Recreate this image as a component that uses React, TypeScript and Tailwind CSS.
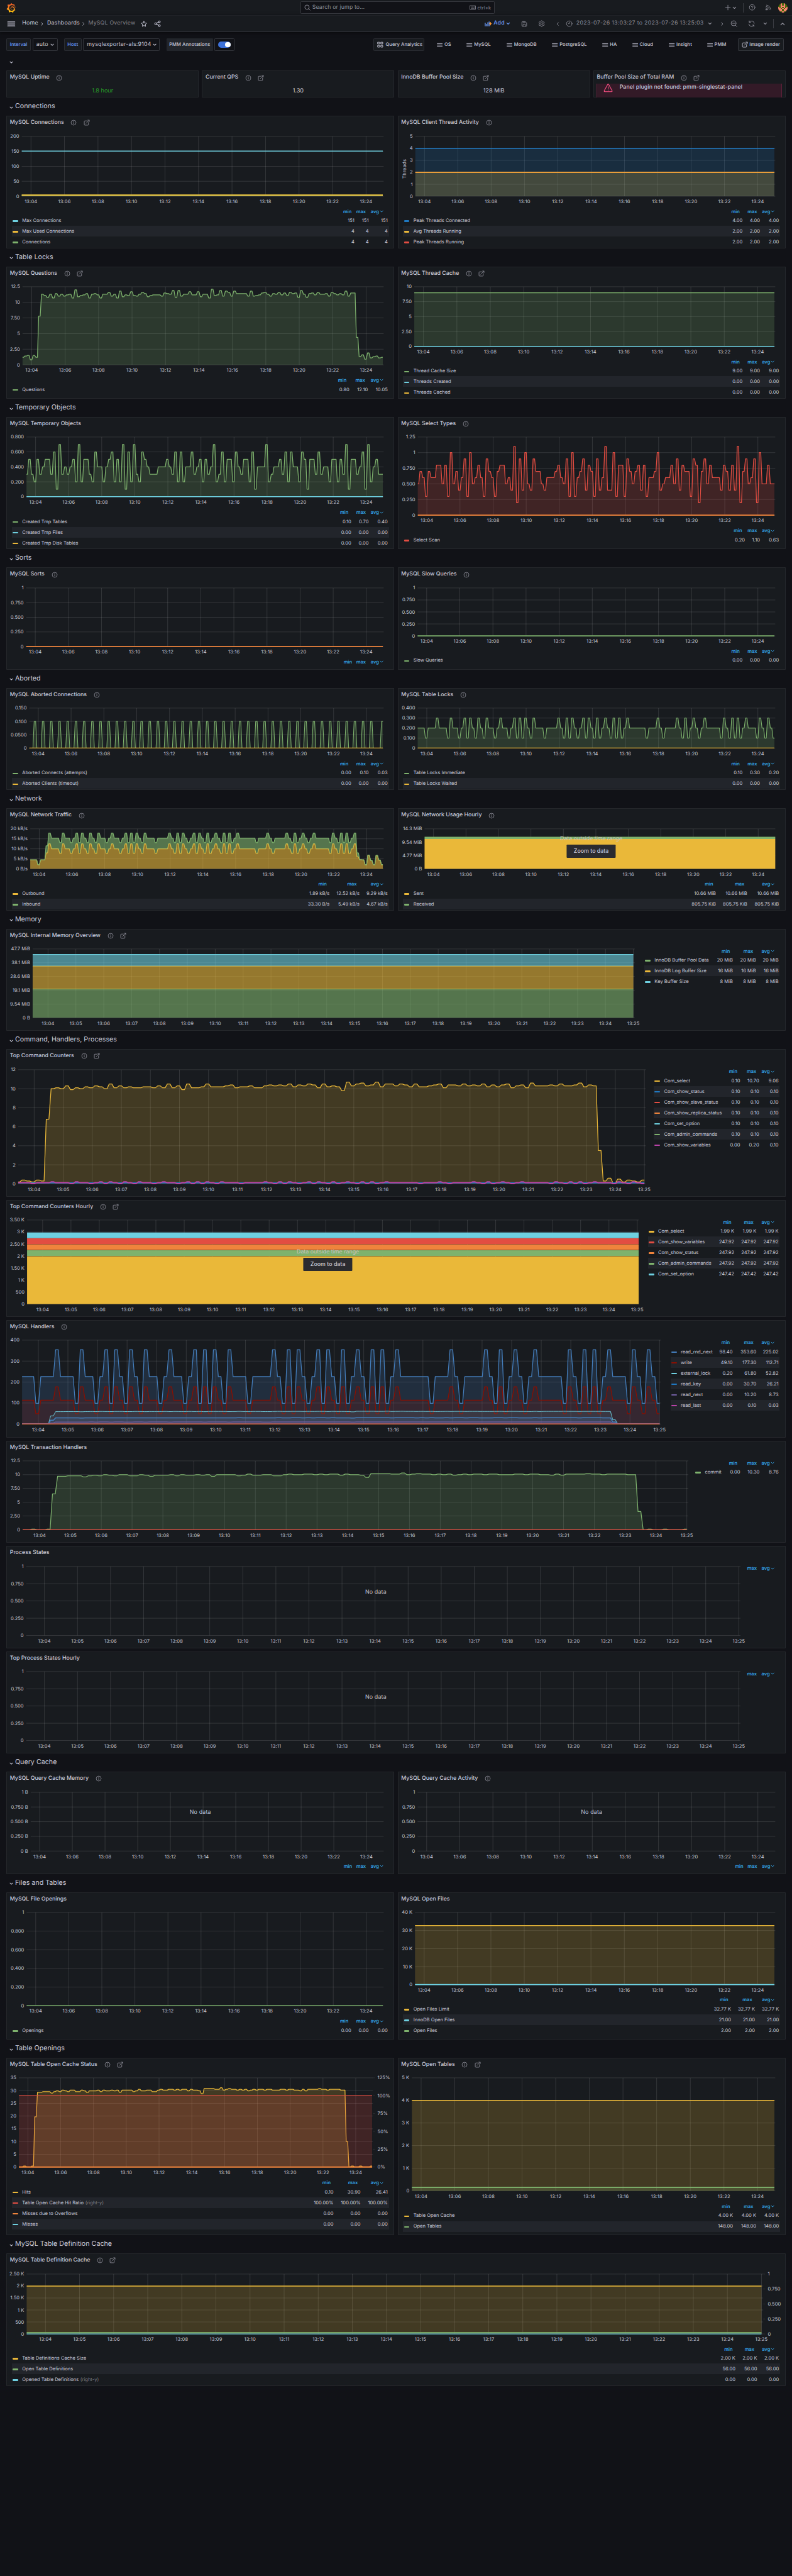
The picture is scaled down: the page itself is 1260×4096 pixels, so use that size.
import React from "react";
import { SiGrafana } from "react-icons/si";

const GREEN = "#7eb26d";
const YELLOW = "#eab839";
const CYAN = "#6ed0e0";
const ORANGE = "#ef843c";
const RED = "#e24d42";
const BLUE = "#1f78c1";
const STEEL = "#447ebc";
const MAROON = "#890f02";
const PURPLE = "#ba43a9";
const VIOLET = "#705da0";

/* ---------- sampled data: one value per 10 seconds, 130 samples ---------- */

const SAMPLES = 130;
const DURATION = 1296;

const questions = [
  1.2, 1.4, 1.5, 0.8, 1.5, 1.2, 7.8, 11.3, 11.1, 10.8, 11.3, 10.7, 11.4, 11, 11.3, 11, 11.2, 11.3, 10.7, 12, 10.9, 11.1, 11.2, 11.4, 10.7,
  11.3, 11.4, 11.2, 10.7, 11.3, 11.3, 11.6, 11, 11.3, 10.7, 11.8, 10.9, 11.2, 11.1, 11.7, 11.1, 11, 11.3, 11.6, 11.4, 10.9, 11.1, 11.2,
  11.2, 11.2, 11, 11.5, 11.4, 11.3, 11.9, 10.8, 11.9, 11, 11.3, 11.3, 11.7, 11.2, 11.2, 11.7, 10.9, 11.3, 11.3, 10.7, 12.1, 11.1, 11.2,
  11.9, 11, 11.8, 11.6, 11, 11.8, 11.4, 11.4, 11.4, 11.4, 11, 11.8, 11, 11.1, 11.2, 11.5, 11.6, 11.3, 11, 11.4, 11.3, 11.6, 11.2, 11.5,
  11.1, 11.6, 11.4, 11.5, 10.8, 11.9, 11.3, 10.8, 11.4, 11.5, 11.2, 11.6, 11.3, 11.3, 11.4, 11, 11.6, 11.4, 11.2, 11.4, 11.2, 11.8, 11,
  11.5, 11.5, 4.4, 1.3, 1.6, 0.9, 1.9, 1.1, 1.3, 1.4, 1.1, 1.2,
];

const tenths = (s: string) => s.split(" ").map((n) => Number(n) / 10);

const tmpTables = tenths(
  "3 5 3 2 5 3 4 5 5 3 6 1 7 3 4 3 4 5 2 7 2 5 5 3 2 6 4 4 2 4 5 6 2 5 2 7 1 6 2 7 3 2 6 5 4 3 3 3 4 4 4 5 4 3 6 2 6 2 4 4 6 3 4 5 2 5 3 4 7 2 3 6 2 5 5 2 6 4 3 5 5 2 6 1 4 4 4 7 2 3 4 4 5 3 6 2 6 4 4 2 6 5 1 5 5 3 6 3 4 4 2 5 5 2 5 3 7 1 5 5 3 4 6 1 7 2 4 5 3 3",
);

const selectScan = tenths(
  "5 7 6 3 7 6 6 8 8 5 8 3 10 5 7 4 6 9 3 10 5 6 8 6 3 9 7 6 3 7 8 8 5 6 4 11 2 9 4 10 5 4 9 7 7 5 4 6 6 6 7 8 6 5 9 3 10 3 6 7 9 4 8 7 3 9 4 6 11 4 4 10 3 8 8 3 9 7 5 7 8 4 8 3 6 6 7 10 4 5 6 6 8 5 9 4 8 7 7 3 9 8 2 7 9 5 8 6 6 6 4 8 7 4 8 4 11 2 7 9 5 6 9 2 10 5 5 8 5 5",
);

const comSelect = [
  0.2, 0.4, 0.3, 0.2, 0.4, 0.3, 6.8, 10, 10.1, 10, 10.3, 9.9, 10.1, 10, 10.2, 10.1, 10.3, 10.2, 10, 10.5, 10.1, 10.3, 10.1, 10.2, 10.1,
  10.1, 10.2, 10.2, 10.1, 10.3, 10.1, 10.5, 10.1, 10.3, 9.9, 10.5, 10.1, 10.1, 10.2, 10.5, 10.2, 10.2, 10.2, 10.3, 10.4, 10.1, 10.2,
  10.2, 10.3, 10.1, 10.1, 10.3, 10.4, 10.3, 10.4, 10.3, 10.5, 10.2, 10.4, 10.3, 10.5, 10.4, 10.1, 10.5, 10.2, 10.3, 10.2, 9.8, 10.7,
  10.3, 10.5, 10.6, 10.3, 10.4, 10.7, 10.2, 10.5, 10.5, 10.3, 10.5, 10.4, 10.2, 10.5, 10.2, 10.2, 10.3, 10.4, 10.5, 10.1, 10.4, 10.4,
  10.3, 10.5, 10.3, 10.4, 10.3, 10.5, 10.2, 10.4, 10.2, 10.4, 10.5, 10.1, 10.3, 10.4, 10.1, 10.6, 10.3, 10.3, 10.3, 10.4, 10.3, 10.5,
  10.3, 10.3, 10.4, 10.6, 10.2, 10.4, 10.3, 3.5, 0.3, 0.6, 0.1, 0.5, 0.2, 0.4, 0.3, 0.2, 0.4,
];

const commit = [
  0, 0, 0.1, 0, 0, 0.1, 6.5, 9.7, 9.7, 9.8, 9.8, 9.8, 9.6, 9.8, 9.9, 9.8, 10, 9.9, 9.8, 10, 10, 9.8, 9.8, 10, 9.9, 9.7, 9.9, 9.9, 9.9,
  10, 9.8, 10, 9.9, 9.9, 10, 9.9, 10, 9.7, 10, 10, 10, 10, 9.8, 9.9, 10.1, 9.9, 9.9, 10, 10, 9.8, 9.8, 10, 10.1, 10, 10, 10.1, 10.1, 10,
  10.1, 10, 10.1, 10.1, 9.9, 10.1, 10, 10, 9.9, 9.5, 10.2, 10.2, 10.2, 10.2, 10.1, 10.1, 10.3, 10, 10.1, 10.2, 10.1, 10.1, 10, 10.1, 10,
  10.1, 9.9, 10, 10.1, 10, 10.1, 10.1, 10, 10.1, 10.1, 10, 10, 10, 10.1, 10.1, 10, 10.1, 10.1, 10, 10, 9.9, 10.1, 9.9, 10.1, 10.1, 10.1,
  10.1, 10.2, 10.1, 10.1, 10, 10.1, 10.1, 10.1, 10.1, 10, 10, 3.3, 0, 0.1, 0, 0, 0.1, 0, 0, 0, 0.1,
];

const highs = new Set([
  7, 12, 17, 19, 22, 25, 30, 35, 37, 39, 42, 51, 54, 56, 60, 62, 65, 68, 71, 73, 76, 87, 94, 97, 100, 104, 111, 114, 116, 119, 124, 127,
]);
const lows = new Set([
  3, 11, 15, 18, 21, 24, 28, 33, 36, 38, 41, 46, 53, 55, 58, 61, 64, 66, 70, 72, 74, 83, 89, 96, 98, 102, 110, 113, 115, 117, 123, 126, 129,
]);

const each = (f: (i: number) => number) => Array.from({ length: SAMPLES }, (_, i) => f(i));
const pulse = (low: number, mid: number, high: number) => each((i) => (highs.has(i) ? high : lows.has(i) ? low : mid));
const plateau = (edge: number, top: number) =>
  each((i) => (i < 6 || i > 120 ? 0.5 : i === 6 ? edge : i === 120 ? top / 3 : top * (0.96 + (commit[i] - 9.6) * 0.06)));

const aborted = each((i) => ((i % 3 === 2 && i < 128) || i === 129 ? 0.1 : 0));
const lockPulse = pulse(0.1, 0.2, 0.3);
const outbound = pulse(7.7, 10, 12.5).map((v, i) => {
  if (i < 6) return i === 3 ? 2 : 4.4;
  if (i === 6) return 8;
  if (i < 120) return v;
  return [6, 4.5, 4.4, 2, 6.8, 4.1, 2, 6.6, 4.3, 2][i - 120];
});
const inboundTop = outbound.map((v, i) => (i < 6 || i > 120 ? v + 0.1 : i === 6 ? 11.5 : i === 120 ? 8 : v + 5.4));
const hits = commit.map((v) => v * 3 + (v > 5 ? 0.2 : 0.1));

/* ------------------------------- chart ------------------------------- */

type Series = { c: string; v: number | number[]; fill?: number; w?: number; base?: number | number[]; full?: boolean; line?: boolean };

type ChartProps = {
  w: number;
  bottom: number;
  l: number;
  r: number;
  b: number;
  max: number;
  ticks: string[];
  minutes?: 1 | 2;
  series?: Series[];
  right?: string[];
  title?: string;
};

const TOP = 51.3;
const HEAD = 34;

function Chart({ w, bottom, l, r, b, max, ticks, minutes = 2, series = [], right, title }: ChartProps) {
  const px = (t: number) => l + (t * (r - l)) / DURATION;
  const py = (v: number) => b - (v / max) * (b - TOP);
  const end = px(1293);
  const trace = (v: number | number[], full?: boolean): string[] => {
    const stop = full ? r : end;
    if (typeof v === "number") return [`${l} ${py(v).toFixed(2)}`, `${stop} ${py(v).toFixed(2)}`];
    const out: string[] = [];
    v.forEach((n, i) => {
      const y = py(n).toFixed(2);
      out.push(`${Math.max(l, px(i * 10 - 2)).toFixed(2)} ${y}`, `${Math.min(end, px(i * 10 + 3.5)).toFixed(2)} ${y}`);
    });
    return out;
  };
  const times: number[] = [];
  for (let m = 4; m <= 25; m += minutes) times.push(m);
  const n = ticks.length - 1;
  return (
    <svg
      width={w}
      height={bottom - HEAD}
      viewBox={`0 ${HEAD} ${w} ${bottom - HEAD}`}
      className="block shrink-0 overflow-visible text-[12px]"
      fill="#c7c8d6"
    >
      <g stroke="#ffffff" strokeOpacity={0.18} strokeWidth={1.1}>
        {ticks.map((_, i) => {
          const y = b - ((b - TOP) * i) / n;
          return <line key={i} x1={l} x2={r} y1={y} y2={y} />;
        })}
        {times.map((m) => {
          const x = px((m - 4) * 60 + 33);
          return <line key={m} x1={x} x2={x} y1={TOP} y2={b} />;
        })}
      </g>
      {series.map((s, i) => {
        const line = trace(s.v, s.full);
        const floor = trace(s.base ?? 0, s.full).reverse();
        return (
          <g key={i}>
            {s.fill ? <path d={`M${line.join("L")}L${floor.join("L")}Z`} fill={s.c} fillOpacity={s.fill} /> : null}
            {s.line === false ? null : <path d={`M${line.join("L")}`} fill="none" stroke={s.c} strokeWidth={s.w ?? 2} strokeLinejoin="round" />}
          </g>
        );
      })}
      {ticks.map((t, i) => (
        <text key={i} x={l - 6.5} y={b - ((b - TOP) * i) / n + 4} textAnchor="end">
          {t}
        </text>
      ))}
      {right?.map((t, i) => {
        const y = b - ((b - TOP) * i) / (right.length - 1);
        return (
          <g key={i}>
            <line x1={r} x2={r + 5} y1={y} y2={y} stroke="#ffffff" strokeOpacity={0.15} />
            <text x={r + 11.5} y={y + 4}>
              {t}
            </text>
          </g>
        );
      })}
      {times.map((m) => (
        <text key={m} x={px((m - 4) * 60 + 33)} y={b + 18} textAnchor="middle" letterSpacing={0.2}>
          {`13:${String(m).padStart(2, "0")}`}
        </text>
      ))}
      {title ? (
        <text transform="translate(21 133) rotate(-90)" textAnchor="middle" letterSpacing={0.4}>
          {title}
        </text>
      ) : null}
    </svg>
  );
}

/* ------------------------------- legend ------------------------------- */

type Item = [color: string, label: string, ...values: string[]];

function Caret({ size = 12, w = 2, className = "" }: { size?: number; w?: number; className?: string }) {
  return (
    <svg width={size} height={size} viewBox="0 0 12 12" fill="none" stroke="currentColor" strokeWidth={w} strokeLinecap="round" strokeLinejoin="round" className={"shrink-0 " + className}>
      <path d="M3 4.7 L6 7.5 L9 4.7" />
    </svg>
  );
}

/* `edges` holds the right edge of every value column, measured from the legend's left side */
function Legend({ edges, items = [], side = false, width = 952 }: { edges: number[]; items?: Item[]; side?: boolean; width?: number }) {
  const first = side ? 40 : 70;
  const cols = edges.map((e, i) => (i === 0 ? first : e - edges[i - 1]));
  const names = edges.length === 2 ? ["max", "avg"] : ["min", "max", "avg"];
  const grid = { gridTemplateColumns: `minmax(0, 1fr) ${cols.map((c) => c + "px").join(" ")}`, width };
  return (
    <div className={side ? "pt-[12px]" : "ml-[14px]"}>
      <div className="grid h-[20px] items-center pr-[3px] pt-[1px] text-right font-semibold text-[#33a2e5]" style={grid}>
        <span />
        {names.map((nme) =>
          nme === "avg" ? (
            <span key={nme} className="flex items-center justify-end whitespace-nowrap pr-[9px]">
              avg
              <Caret size={13} w={1.4} />
            </span>
          ) : (
            <span key={nme} className="pr-[7px]">
              {nme}
            </span>
          ),
        )}
      </div>
      {items.map(([color, label, ...values], i) => {
        const [name, suffix] = label.split("|");
        return (
          <div key={i} className={"grid h-[27px] items-center whitespace-nowrap pr-[3px] text-right " + (i % 2 ? "bg-[#22252b]" : "")} style={grid}>
            <span className="flex items-center gap-[10px] text-left">
              <span className="ml-[2px] mt-[3px] h-[4px] w-[14px] shrink-0 rounded-[2px]" style={{ backgroundColor: color }} />
              <span>
                {name}
                {suffix ? <span className="ml-[4px] text-[#7b7c86]">{suffix}</span> : null}
              </span>
            </span>
            {values.map((v, k) => (
              <span key={k}>{v}</span>
            ))}
          </div>
        );
      })}
    </div>
  );
}

/* ------------------------------- panels ------------------------------- */

const Info = () => (
  <svg width="16" height="16" viewBox="0 0 16 16" fill="none" stroke="#8e8e99" strokeWidth="1.3" className="shrink-0">
    <circle cx="8" cy="8" r="6.3" />
    <path d="M8 7.4 V11 M8 4.6 V5.8" strokeLinecap="round" />
  </svg>
);

const External = ({ color = "#8e8e99" }: { color?: string }) => (
  <svg width="16" height="16" viewBox="0 0 16 16" fill="none" stroke={color} strokeWidth="1.4" strokeLinecap="round" strokeLinejoin="round" className="shrink-0">
    <path d="M8.5 3.5 H3.2 A1.5 1.5 0 0 0 1.7 5 V12.7 A1.5 1.5 0 0 0 3.2 14.2 H10.8 A1.5 1.5 0 0 0 12.3 12.7 V7.6 M6.2 9.8 L14.1 1.8 M10.6 1.6 H14.3 V5.4" />
  </svg>
);

function Panel({ title, icons = 0, className, children }: { title: string; icons?: 0 | 1 | 2; className: string; children?: React.ReactNode }) {
  return (
    <section className={"relative flex min-w-0 flex-1 flex-col overflow-hidden rounded-[2px] bg-[#181b1f] pb-[9px] shadow-[inset_0_0_0_1.2px_#2a2c31] " + className}>
      <h2 className="flex h-[34px] shrink-0 items-center pl-[9px] pt-[2px] text-[14px] font-medium tracking-[-0.02px]">
        {title}
        {icons > 0 && (
          <span className="ml-[17px] flex gap-[16px]">
            <Info />
            {icons > 1 && <External />}
          </span>
        )}
      </h2>
      {children}
    </section>
  );
}

const Row = ({ children }: { children: React.ReactNode }) => <div className="mb-[8px] flex gap-[8px]">{children}</div>;

const Section = ({ title = "" }: { title?: string }) => (
  <div className="mb-[8px] flex h-[30px] items-center pl-[7px] text-[17px] leading-none">
    <Caret size={13} w={1.5} className="mr-[2px] mt-[4px]" />
    <span>{title}</span>
  </div>
);

const Side = ({ children }: { children: React.ReactNode }) => <div className="flex min-h-0 flex-1">{children}</div>;

function Outside({ className }: { className: string }) {
  return (
    <div className={"absolute flex -translate-x-1/2 flex-col items-center text-[14px] " + className}>
      <span className="h-[22px] text-[#c8c4c0]">Data outside time range</span>
      <button className="flex h-[33px] w-[123px] items-center justify-center rounded-[2px] bg-[#2b2b2f] font-medium">Zoom to data</button>
    </div>
  );
}

const NoData = ({ className }: { className: string }) => (
  <span className={"absolute -translate-x-1/2 -translate-y-1/2 text-[14px] tracking-[0.3px] " + className}>No data</span>
);

const Stat = ({ value, className = "" }: { value: string; className?: string }) => (
  <div className={"mt-[8px] text-center text-[14.5px] leading-[18px] " + className}>{value}</div>
);

/* ------------------------------- header ------------------------------- */

const Stroke = ({ d, size = 16, w = 1.5, className = "" }: { d: string; size?: number; w?: number; className?: string }) => (
  <svg width={size} height={size} viewBox="0 0 16 16" fill="none" stroke="currentColor" strokeWidth={w} strokeLinecap="round" strokeLinejoin="round" className={"shrink-0 " + className}>
    <path d={d} />
  </svg>
);

const CHEVRON_RIGHT = "M6 4.5 L9.5 8 L6 11.5";
const CHEVRON_LEFT = "M10 4.5 L6.5 8 L10 11.5";
const CHEVRON_UP = "M3.5 10.5 L8 6 L12.5 10.5";
const BARS = "M1 4 H15 M1 8 H15 M1 12 H15";

const avatarPixels = [
  "g.r..r.g",
  "..r..r..",
  "..rrrr..",
  "r.r..r.r",
  "rr.rr.rr",
  "rrr..rrr",
  ".rr..rr.",
  "...rr...",
];

function Avatar() {
  return (
    <svg width="24" height="24" viewBox="0 0 8 8" className="rounded-full bg-[#4c6b0c]" shapeRendering="crispEdges">
      {avatarPixels.flatMap((line, y) =>
        line.split("").map((ch, x) => (ch === "r" ? <rect key={`${x}-${y}`} x={x} y={y} width="1" height="1" fill="#f9806e" /> : null)),
      )}
    </svg>
  );
}

function TopBar() {
  return (
    <div className="flex h-[40px] items-center border-b border-[#2b2d33] bg-[#181b1f] pl-[16px] pr-[11px] text-[#8e8e99]">
      <svg width="0" height="0" className="absolute">
        <defs>
          <linearGradient id="flame" x1="0" y1="0" x2="0" y2="1">
            <stop offset="0" stopColor="#f05a28" />
            <stop offset="0.45" stopColor="#f47b20" />
            <stop offset="1" stopColor="#fbca0a" />
          </linearGradient>
        </defs>
      </svg>
      <SiGrafana size={24} fill="url(#flame)" stroke="none" />
      <div className="ml-[719px] flex h-[33px] w-[490px] items-center rounded-[2px] border border-[#34363c] bg-[#111217] pl-[8px] pr-[7px] text-[14px]">
        <Stroke d="M7 12.5 A5.5 5.5 0 1 0 7 1.5 A5.5 5.5 0 1 0 7 12.5 M11 11 L14.6 14.6" />
        <span className="ml-[4px] flex-1 tracking-[0.15px]">Search or jump to...</span>
        <Stroke d="M1 3.5 H15 V12.5 H1 Z M4 6.5 H4.1 M6.7 6.5 H6.8 M9.3 6.5 H9.4 M12 6.5 H12.1 M4 9.7 H12" w={1.4} />
        <span className="ml-[4px] text-[12px] tracking-[0.3px]">ctrl+k</span>
      </div>
      <span className="ml-auto flex items-center">
        <Stroke d="M8 2 V14 M2 8 H14" />
        <Caret size={14} w={1.5} className="ml-[2px]" />
        <span className="ml-[14px] h-[24px] w-px bg-[#3a3c42]" />
        <svg width="18" height="18" viewBox="0 0 18 18" fill="none" stroke="currentColor" strokeWidth="1.4" className="ml-[14px]" strokeLinecap="round">
          <circle cx="9" cy="9" r="7" />
          <path d="M7 7.3 A2 2 0 1 1 9 9.5 V10 M9 12.4 V12.5" />
        </svg>
        <svg width="16" height="16" viewBox="0 0 16 16" fill="none" stroke="currentColor" strokeWidth="1.4" className="ml-[22px]" strokeLinecap="round">
          <circle cx="3.2" cy="12.8" r="1.5" />
          <path d="M2 8.8 A5.4 5.4 0 0 1 7.3 14 M3 5.2 A8.4 8.4 0 0 1 10.8 13.4 M4 1.8 A11.6 11.6 0 0 1 14.4 12.6" />
        </svg>
        <span className="ml-[18px]">
          <Avatar />
        </span>
      </span>
    </div>
  );
}

function ToolBar() {
  return (
    <div className="flex h-[41px] items-center border-b border-[#303238] bg-[#181b1f] pl-[17px] pr-[15px] text-[14px] tracking-[0.3px] shadow-[0_2px_8px_#08090b]">
      <svg width="22" height="16" viewBox="0 0 22 16" stroke="#ccccdc" strokeWidth="2" strokeLinecap="round">
        <path d="M2 3 H20 M2 8 H20 M2 13 H20" />
      </svg>
      <span className="ml-[17px] w-[42px]">Home</span>
      <Stroke d={CHEVRON_RIGHT} w={1.3} className="ml-[1px]" />
      <span className="ml-[4px] w-[84px]">Dashboards</span>
      <Stroke d={CHEVRON_RIGHT} w={1.3} />
      <span className="ml-[4px] w-[120px] text-[#82838d]">MySQL Overview</span>
      <Stroke d="M8 1.4 L10 5.7 L14.7 6.3 L11.3 9.5 L12.1 14.2 L8 11.9 L3.9 14.2 L4.7 9.5 L1.3 6.3 L6 5.7 Z" className="ml-[13px]" />
      <svg width="18" height="18" viewBox="0 0 18 18" fill="none" stroke="currentColor" strokeWidth="1.6" className="ml-[17px]">
        <circle cx="4" cy="9" r="2.2" />
        <circle cx="13.6" cy="4" r="2.2" />
        <circle cx="13.6" cy="14" r="2.2" />
        <path d="M6 8 L11.6 5 M6 10 L11.6 13" />
      </svg>
      <span className="ml-auto flex items-center text-[#8e8e99]">
        <svg width="18" height="16" viewBox="0 0 18 16" fill="none" strokeWidth="2" className="mr-[5px]">
          <path d="M1.5 5 V14 M4.8 8 V14 M8 4 V14 M11.4 2 V14" stroke="#6e9fff" />
          <path d="M14.8 3.6 V11.4 M11.6 7.5 H18" stroke="#ff9830" />
        </svg>
        <span className="font-medium text-[#6e9fff]">Add</span>
        <Caret size={14} w={1.5} className="ml-[2px] text-[#6e9fff]" />
        <Stroke d="M2 3.4 A1.4 1.4 0 0 1 3.4 2 H10.5 L14 5.5 V12.6 A1.4 1.4 0 0 1 12.6 14 H3.4 A1.4 1.4 0 0 1 2 12.6 Z M5 2 V5.6 H9.6 V2.2 M4.8 14 V9.6 H11.2 V14" className="ml-[25px]" w={1.4} />
        <svg width="18" height="18" viewBox="0 0 24 24" fill="none" stroke="currentColor" strokeWidth="2" strokeLinejoin="round" className="ml-[27px]">
          <circle cx="12" cy="12" r="3.2" />
          <path d="M12.2 2h-.4a2 2 0 0 0-2 2v.2a2 2 0 0 1-1 1.7l-.5.3a2 2 0 0 1-2 0l-.1-.1a2 2 0 0 0-2.7.7l-.3.4a2 2 0 0 0 .8 2.7l.1.1a2 2 0 0 1 1 1.7v.5a2 2 0 0 1-1 1.8l-.1.1a2 2 0 0 0-.8 2.7l.3.4a2 2 0 0 0 2.7.7l.1-.1a2 2 0 0 1 2 0l.5.3a2 2 0 0 1 1 1.7v.2a2 2 0 0 0 2 2h.4a2 2 0 0 0 2-2v-.2a2 2 0 0 1 1-1.7l.5-.3a2 2 0 0 1 2 0l.1.1a2 2 0 0 0 2.7-.7l.3-.4a2 2 0 0 0-.8-2.7l-.1-.1a2 2 0 0 1-1-1.8v-.5a2 2 0 0 1 1-1.7l.1-.1a2 2 0 0 0 .8-2.7l-.3-.4a2 2 0 0 0-2.7-.7l-.1.1a2 2 0 0 1-2 0l-.5-.3a2 2 0 0 1-1-1.7V4a2 2 0 0 0-2-2z" />
        </svg>
        <Stroke d={CHEVRON_LEFT} className="ml-[23px]" />
        <svg width="18" height="18" viewBox="0 0 18 18" fill="none" stroke="currentColor" strokeWidth="1.4" strokeLinecap="round" className="ml-[14px]">
          <circle cx="9" cy="9" r="7" />
          <path d="M9 5 V9 H6.8" />
        </svg>
        <span className="ml-[8px] w-[321px] whitespace-nowrap tracking-[0.45px]">2023-07-26 13:03:27 to 2023-07-26 13:25:03</span>
        <Caret size={14} w={1.5} className="ml-[10px]" />
        <Stroke d={CHEVRON_RIGHT} className="ml-[15px]" />
        <svg width="18" height="18" viewBox="0 0 18 18" fill="none" stroke="currentColor" strokeWidth="1.5" strokeLinecap="round" className="ml-[14px]">
          <circle cx="8" cy="8" r="6.2" />
          <path d="M12.6 12.6 L16.2 16.2 M5.4 8 H10.6" />
        </svg>
        <svg width="18" height="18" viewBox="0 0 18 18" fill="none" stroke="currentColor" strokeWidth="1.5" strokeLinecap="round" className="ml-[26px]">
          <path d="M2.2 10 A7 7 0 0 0 14.8 13 M15.8 8 A7 7 0 0 0 3.2 5 M3 1.8 V5.4 H6.6 M15 16.2 V12.6 H11.4" />
        </svg>
        <Caret size={14} w={1.5} className="ml-[18px]" />
        <span className="ml-[14px] h-[24px] w-px bg-[#3a3c42]" />
        <Stroke d={CHEVRON_UP} w={2} className="ml-[15px]" />
      </span>
    </div>
  );
}

const links: [string, string][] = [
  ["OS", "w-[75px]"],
  ["MySQL", "w-[101px]"],
  ["MongoDB", "w-[115px]"],
  ["PostgreSQL", "w-[127px]"],
  ["HA", "w-[75px]"],
  ["Cloud", "w-[93px]"],
  ["Insight", "w-[96px]"],
  ["PMM", "w-[78px]"],
];

function Variables() {
  return (
    <div className="flex h-[32px] items-center text-[12px] font-medium tracking-[0.1px]">
      <span className="flex h-full w-[62px] items-center justify-center rounded-[2px] border border-[#2b2d33] bg-[#181b1f] text-[#6e9fff]">Interval</span>
      <span className="ml-[4px] flex h-full w-[64px] items-center rounded-[2px] border border-[#34363c] pl-[8px] pt-[1px] text-[14px] font-normal tracking-[0.3px]">
        auto
        <Caret size={13} w={1.5} className="ml-[3px]" />
      </span>
      <span className="ml-[16px] flex h-full w-[44px] items-center justify-center rounded-[2px] border border-[#2b2d33] bg-[#181b1f] text-[#6e9fff]">Host</span>
      <span className="ml-[4px] flex h-full w-[194px] items-center whitespace-nowrap rounded-[2px] border border-[#34363c] pl-[8px] pt-[1px] text-[14px] font-normal tracking-[0.3px]">
        mysqlexporter-als:9104
        <Caret size={13} w={1.5} className="ml-[3px]" />
      </span>
      <span className="ml-[16px] flex h-full w-[118px] items-center justify-center rounded-[2px] bg-[#22252b]">PMM Annotations</span>
      <span className="ml-[4px] flex h-full w-[50px] items-center justify-center rounded-[2px] border border-[#34363c]">
        <span className="flex h-[16px] w-[32px] items-center justify-end rounded-full bg-[#3d71d9] pr-[1px]">
          <span className="size-[13px] rounded-full bg-white" />
        </span>
      </span>
      <span className="ml-auto flex h-full w-[129px] items-center gap-[5px] whitespace-nowrap rounded-[2px] border border-[#2b2d33] bg-[#181b1f] pl-[8px]">
        <Stroke d="M1.8 1.8 H6.2 V6.2 H1.8 Z M9.8 1.8 H14.2 V6.2 H9.8 Z M1.8 9.8 H6.2 V14.2 H1.8 Z M9.8 9.8 H14.2 V14.2 H9.8 Z" w={1.4} />
        Query Analytics
      </span>
      <span className="ml-[31px] flex">
        {links.map(([name, width]) => (
          <span key={name} className={"flex items-center gap-[4px] whitespace-nowrap " + width}>
            <Stroke d={BARS} w={1.6} size={15} className="mt-[2px]" />
            {name}
          </span>
        ))}
      </span>
      <span className="mr-[4px] flex h-full w-[117px] items-center gap-[4px] whitespace-nowrap rounded-[2px] border border-[#34363c] bg-[#181b1f] pl-[8px]">
        <External color="#ccccdc" />
        Image render
      </span>
    </div>
  );
}

/* -------------------------------- page -------------------------------- */

const fourths = (u = "") => ["0" + u, "0.250" + u, "0.500" + u, "0.750" + u, "1" + u];
const H = { h2: "h-[68px]", h7: "h-[258px]", h8: "h-[296px]", h9: "h-[334px]", h10: "h-[372px]", h12: "h-[448px]" };
const Z3 = ["0.00", "0.00", "0.00"];

export default function App() {
  return (
    <div className="h-[4096px] w-[1260px] overflow-hidden bg-[#111217]">
      <div
        className="w-[2000px] text-[12px] leading-[1.2] text-[#ccccdc] [text-rendering:geometricPrecision] [zoom:0.63]"
        style={{ fontFamily: "Inter, 'Liberation Sans', sans-serif" }}
      >
        <TopBar />
        <ToolBar />
        <main className="px-[16px] pt-[15.5px]">
          <Variables />
          <div className="h-[12px]" />
          <Section />
          <Row>
            <Panel title="MySQL Uptime" icons={1} className={H.h2}>
              <Stat value="1.8 hour" className="text-[#299c28]" />
            </Panel>
            <Panel title="Current QPS" icons={2} className={H.h2}>
              <Stat value="1.30" />
            </Panel>
            <Panel title="InnoDB Buffer Pool Size" icons={2} className={H.h2}>
              <Stat value="128 MiB" />
            </Panel>
            <Panel title="Buffer Pool Size of Total RAM" icons={2} className={H.h2 + " !pb-px"}>
              <div className="mx-[9px] -mt-px flex min-h-0 flex-1 border-x border-[#5c2038] bg-[#331a27] pl-[16px] text-[14px] font-medium tracking-[0.1px]">
                <svg width="24" height="22" viewBox="0 0 24 22" fill="none" stroke="#ff5286" strokeWidth="1.7" strokeLinejoin="round" strokeLinecap="round">
                  <path d="M11 1.6 Q12 0.4 13 1.6 L22 18 Q22.6 20 21 20.2 H3 Q1.4 20 2 18 Z M12 7.5 V12.5 M12 16 V16.2" />
                </svg>
                <span className="ml-[16px] mt-[1px]">Panel plugin not found: pmm-singlestat-panel</span>
              </div>
            </Panel>
          </Row>

          <Section title="Connections" />
          <Row>
            <Panel title="MySQL Connections" icons={2} className={H.h9}>
              <Chart
                w={980} bottom={230.7} l={39} r={953} b={202.3} max={200}
                ticks={["0", "50", "100", "150", "200"]}
                series={[{ c: CYAN, v: 151, w: 2.4 }, { c: GREEN, v: 2.5, w: 4, fill: 0.2 }, { c: YELLOW, v: 4, w: 3, fill: 0.3 }]}
              />
              <Legend
                edges={[865, 901, 949]}
                items={[[CYAN, "Max Connections", "151", "151", "151"], [YELLOW, "Max Used Connections", "4", "4", "4"], [GREEN, "Connections", "4", "4", "4"]]}
              />
            </Panel>
            <Panel title="MySQL Client Thread Activity" icons={1} className={H.h9}>
              <Chart
                w={980} bottom={230.7} l={44} r={953} b={202.3} max={5} title="Threads"
                ticks={["0", "1", "2", "3", "4", "5"]}
                series={[{ c: BLUE, v: 4, fill: 0.2, w: 2.4 }, { c: YELLOW, v: 2, fill: 0.2, line: false }, { c: RED, v: 2, w: 3.4 }, { c: YELLOW, v: 2, w: 2.4 }]}
              />
              <Legend
                edges={[857, 901, 949]}
                items={[[BLUE, "Peak Threads Connected", "4.00", "4.00", "4.00"], [YELLOW, "Avg Threads Running", "2.00", "2.00", "2.00"], [RED, "Peak Threads Running", "2.00", "2.00", "2.00"]]}
              />
            </Panel>
          </Row>

          <Section title="Table Locks" />
          <Row>
            <Panel title="MySQL Questions" icons={2} className={H.h9}>
              <Chart
                w={980} bottom={276.9} l={41} r={953} b={248.5} max={12.5}
                ticks={["0", "2.50", "5", "7.50", "10", "12.5"]}
                series={[{ c: GREEN, v: questions, fill: 0.2 }]}
              />
              <Legend edges={[852, 899, 949]} items={[[GREEN, "Questions", "0.80", "12.10", "10.05"]]} />
            </Panel>
            <Panel title="MySQL Thread Cache" icons={2} className={H.h9}>
              <Chart
                w={980} bottom={230.7} l={41.3} r={953} b={201.9} max={10}
                ticks={["0", "2.50", "5", "7.50", "10"]}
                series={[{ c: GREEN, v: 9, fill: 0.2, w: 2.4 }, { c: CYAN, v: 0, w: 2.4 }]}
              />
              <Legend
                edges={[857, 901, 949]}
                items={[[GREEN, "Thread Cache Size", "9.00", "9.00", "9.00"], [CYAN, "Threads Created", ...Z3], [YELLOW, "Threads Cached", ...Z3]]}
              />
            </Panel>
          </Row>

          <Section title="Temporary Objects" />
          <Row>
            <Panel title="MySQL Temporary Objects" className={H.h9}>
              <Chart
                w={980} bottom={230.7} l={51} r={953} b={202} max={0.8}
                ticks={["0", "0.200", "0.400", "0.600", "0.800"]}
                series={[{ c: GREEN, v: tmpTables, fill: 0.2 }, { c: CYAN, v: 0, w: 2.4 }]}
              />
              <Legend
                edges={[857, 901, 949]}
                items={[[GREEN, "Created Tmp Tables", "0.10", "0.70", "0.40"], [CYAN, "Created Tmp Files", ...Z3], [YELLOW, "Created Tmp Disk Tables", ...Z3]]}
              />
            </Panel>
            <Panel title="MySQL Select Types" icons={1} className={H.h9}>
              <Chart
                w={980} bottom={276.9} l={50.2} r={953} b={248.5} max={1.25}
                ticks={["0", "0.250", "0.500", "0.750", "1", "1.25"]}
                series={[{ c: RED, v: selectScan, fill: 0.2 }, { c: ORANGE, v: 0, w: 3 }]}
              />
              <Legend edges={[863, 901, 949]} items={[[RED, "Select Scan", "0.20", "1.10", "0.63"]]} />
            </Panel>
          </Row>

          <Section title="Sorts" />
          <Row>
            <Panel title="MySQL Sorts" icons={1} className={H.h7}>
              <Chart w={980} bottom={228} l={50.2} r={953} b={199.3} max={1} ticks={fourths()} series={[{ c: ORANGE, v: 0, w: 2.8 }]} />
              <Legend edges={[866, 901, 949]} />
            </Panel>
            <Panel title="MySQL Slow Queries" icons={1} className={H.h7}>
              <Chart w={980} bottom={201} l={49.7} r={953} b={172.3} max={1} ticks={fourths()} series={[{ c: GREEN, v: 0, w: 2.4 }]} />
              <Legend edges={[857, 901, 949]} items={[[GREEN, "Slow Queries", ...Z3]]} />
            </Panel>
          </Row>

          <Section title="Aborted" />
          <Row>
            <Panel title="MySQL Aborted Connections" icons={1} className={H.h7}>
              <Chart
                w={980} bottom={181} l={58} r={953} b={152.2} max={0.15}
                ticks={["0", "0.0500", "0.100", "0.150"]}
                series={[{ c: GREEN, v: aborted, fill: 0.2, w: 1.7 }, { c: YELLOW, v: 0 }]}
              />
              <Legend edges={[857, 901, 949]} items={[[GREEN, "Aborted Connects (attempts)", "0.00", "0.10", "0.03"], [YELLOW, "Aborted Clients (timeout)", ...Z3]]} />
            </Panel>
            <Panel title="MySQL Table Locks" icons={1} className={H.h7}>
              <Chart
                w={980} bottom={181} l={50} r={953} b={152.2} max={0.4}
                ticks={["0", "0.100", "0.200", "0.300", "0.400"]}
                series={[{ c: GREEN, v: lockPulse, fill: 0.2, w: 1.8 }, { c: YELLOW, v: 0 }]}
              />
              <Legend edges={[857, 901, 949]} items={[[GREEN, "Table Locks Immediate", "0.10", "0.30", "0.20"], [YELLOW, "Table Locks Waited", ...Z3]]} />
            </Panel>
          </Row>

          <Section title="Network" />
          <Row>
            <Panel title="MySQL Network Traffic" icons={1} className={H.h7}>
              <Chart
                w={980} bottom={181} l={60.5} r={953} b={152.2} max={20}
                ticks={["0 B/s", "5 kB/s", "10 kB/s", "15 kB/s", "20 kB/s"]}
                series={[{ c: YELLOW, v: outbound, fill: 0.6 }, { c: GREEN, v: inboundTop, base: outbound, fill: 0.6 }]}
              />
              <Legend edges={[802, 878, 949]} items={[[YELLOW, "Outbound", "1.89 kB/s", "12.52 kB/s", "9.29 kB/s"], [GREEN, "Inbound", "33.30 B/s", "5.49 kB/s", "4.67 kB/s"]]} />
            </Panel>
            <Panel title="MySQL Network Usage Hourly" icons={1} className={H.h7}>
              <Chart
                w={980} bottom={181} l={67.4} r={953} b={152.2} max={14.3}
                ticks={["0 B", "4.77 MiB", "9.54 MiB", "14.3 MiB"]}
                series={[{ c: YELLOW, v: 10.66, fill: 1, full: true, line: false }, { c: GREEN, v: 11.45, base: 10.66, fill: 1, full: true, line: false }]}
              />
              <Legend
                edges={[790, 869, 949]}
                items={[[YELLOW, "Sent", "10.66 MiB", "10.66 MiB", "10.66 MiB"], [GREEN, "Received", "805.75 KiB", "805.75 KiB", "805.75 KiB"]]}
              />
              <Outside className="left-[489px] top-[70px]" />
            </Panel>
          </Row>

          <Section title="Memory" />
          <Row>
            <Panel title="MySQL Internal Memory Overview" icons={2} className={H.h7}>
              <Side>
                <Chart
                  w={1611} bottom={250} l={66.6} r={1587} b={225} max={47.7} minutes={1}
                  ticks={["0 B", "9.54 MiB", "19.1 MiB", "28.6 MiB", "38.1 MiB", "47.7 MiB"]}
                  series={[
                    { c: GREEN, v: 19.9, fill: 0.6 },
                    { c: YELLOW, v: 35.8, base: 19.9, fill: 0.6 },
                    { c: CYAN, v: 43.9, base: 35.8, fill: 0.6 },
                  ]}
                />
                <Legend
                  side width={342} edges={[224, 282.5, 339.5]}
                  items={[[GREEN, "InnoDB Buffer Pool Data", "20 MiB", "20 MiB", "20 MiB"], [YELLOW, "InnoDB Log Buffer Size", "16 MiB", "16 MiB", "16 MiB"], [CYAN, "Key Buffer Size", "8 MiB", "8 MiB", "8 MiB"]]}
                />
              </Side>
            </Panel>
          </Row>

          <Section title="Command, Handlers, Processes" />
          <Row>
            <Panel title="Top Command Counters" icons={2} className={H.h10}>
              <Side>
                <Chart
                  w={1635} bottom={363} l={30} r={1615} b={339.3} max={12} minutes={1}
                  ticks={["0", "2", "4", "6", "8", "10", "12"]}
                  series={[
                    { c: YELLOW, v: comSelect, fill: 0.2 },
                    { c: BLUE, v: 0.1, w: 3 },
                    { c: PURPLE, v: pulse(0.02, 0.12, 0.2), w: 3 },
                  ]}
                />
                <Legend
                  side width={318} edges={[219, 267, 316]}
                  items={[
                    [YELLOW, "Com_select", "0.10", "10.70", "9.06"],
                    [BLUE, "Com_show_status", "0.10", "0.10", "0.10"],
                    [RED, "Com_show_slave_status", "0.10", "0.10", "0.10"],
                    [ORANGE, "Com_show_replica_status", "0.10", "0.10", "0.10"],
                    [CYAN, "Com_set_option", "0.10", "0.10", "0.10"],
                    [GREEN, "Com_admin_commands", "0.10", "0.10", "0.10"],
                    [PURPLE, "Com_show_variables", "0.00", "0.20", "0.10"],
                  ]}
                />
              </Side>
            </Panel>
          </Row>
          <Row>
            <Panel title="Top Command Counters Hourly" icons={2} className={H.h8}>
              <Side>
                <Chart
                  w={1620} bottom={287} l={52.4} r={1597} b={263.2} max={3.5} minutes={1}
                  ticks={["0", "500", "1 K", "1.50 K", "2 K", "2.50 K", "3 K", "3.50 K"]}
                  series={[
                    { c: YELLOW, v: 1.99, fill: 1, full: true, line: false },
                    { c: GREEN, v: 2.24, base: 2, fill: 1, full: true, line: false },
                    { c: ORANGE, v: 2.485, base: 2.25, fill: 1, full: true, line: false },
                    { c: RED, v: 2.735, base: 2.495, fill: 1, full: true, line: false },
                    { c: CYAN, v: 2.98, base: 2.745, fill: 1, full: true, line: false },
                  ]}
                />
                <Legend
                  side width={333} edges={[219, 275, 331]}
                  items={[
                    [YELLOW, "Com_select", "1.99 K", "1.99 K", "1.99 K"],
                    [RED, "Com_show_variables", "247.92", "247.92", "247.92"],
                    [ORANGE, "Com_show_status", "247.92", "247.92", "247.92"],
                    [GREEN, "Com_admin_commands", "247.92", "247.92", "247.92"],
                    [CYAN, "Com_set_option", "247.42", "247.42", "247.42"],
                  ]}
                />
              </Side>
              <Outside className="left-[812px] top-[125px]" />
            </Panel>
          </Row>
          <Row>
            <Panel title="MySQL Handlers" icons={1} className={H.h8}>
              <Side>
                <Chart
                  w={1677} bottom={287} l={39.8} r={1653.5} b={263} max={400} minutes={1}
                  ticks={["0", "100", "200", "300", "400"]}
                  series={[
                    { c: STEEL, v: pulse(98.5, 226, 354), fill: 0.2 },
                    { c: MAROON, v: pulse(49, 113.5, 177), fill: 0.2 },
                    { c: CYAN, v: plateau(39, 61), fill: 0.1, w: 1.5 },
                    { c: STEEL, v: plateau(18, 30), fill: 0.18, w: 2.4 },
                    { c: VIOLET, v: plateau(5, 10), fill: 0.2 },
                    { c: PURPLE, v: 0.4, w: 1.4 },
                    { c: "#d0683a", v: 0, w: 2.2 },
                  ]}
                />
                <Legend
                  side width={276} edges={[158, 218, 274]}
                  items={[
                    [STEEL, "read_rnd_next", "98.40", "353.60", "225.02"],
                    [MAROON, "write", "49.10", "177.30", "112.71"],
                    [CYAN, "external_lock", "0.20", "61.80", "52.82"],
                    [BLUE, "read_key", "0.00", "30.70", "26.21"],
                    [VIOLET, "read_next", "0.00", "10.20", "8.73"],
                    [PURPLE, "read_last", "0.00", "0.10", "0.03"],
                  ]}
                />
              </Side>
            </Panel>
          </Row>
          <Row>
            <Panel title="MySQL Transaction Handlers" className={H.h7}>
              <Side>
                <Chart
                  w={1738} bottom={249} l={41.3} r={1722.5} b={225} max={12.5} minutes={1}
                  ticks={["0", "2.50", "5", "7.50", "10", "12.5"]}
                  series={[{ c: GREEN, v: commit, fill: 0.2 }, { c: RED, v: 0 }]}
                />
                <Legend side width={215} edges={[115, 164, 212]} items={[[GREEN, "commit", "0.00", "10.30", "8.76"]]} />
              </Side>
            </Panel>
          </Row>
          {["Process States", "Top Process States Hourly"].map((title) => (
            <Row key={title}>
              <Panel title={title} className={H.h7}>
                <Side>
                  <Chart w={1860} bottom={249} l={50.3} r={1854} b={225.2} max={1} ticks={fourths()} minutes={1} />
                  <Legend side width={93} edges={[43, 91]} />
                </Side>
                <NoData className="left-[933px] top-[117px]" />
              </Panel>
            </Row>
          ))}

          <Section title="Query Cache" />
          <Row>
            <Panel title="MySQL Query Cache Memory" icons={1} className={H.h7}>
              <Chart w={980} bottom={228} l={61.6} r={953} b={199.5} max={1} ticks={fourths(" B")} />
              <Legend edges={[866, 901, 949]} />
              <NoData className="left-[490px] top-[103px]" />
            </Panel>
            <Panel title="MySQL Query Cache Activity" icons={1} className={H.h7}>
              <Chart w={980} bottom={228} l={49.7} r={953} b={199.5} max={1} ticks={fourths()} />
              <Legend edges={[866, 901, 949]} />
              <NoData className="left-[490px] top-[103px]" />
            </Panel>
          </Row>

          <Section title="Files and Tables" />
          <Row>
            <Panel title="MySQL File Openings" className={H.h10}>
              <Chart
                w={980} bottom={315.4} l={51.4} r={953} b={286.6} max={1}
                ticks={["0", "0.200", "0.400", "0.600", "0.800", "1"]}
                series={[{ c: GREEN, v: 0, w: 2.4 }]}
              />
              <Legend edges={[857, 901, 949]} items={[[GREEN, "Openings", ...Z3]]} />
            </Panel>
            <Panel title="MySQL Open Files" className={H.h10}>
              <Chart
                w={980} bottom={261.5} l={43.2} r={953} b={233.8} max={40}
                ticks={["0", "10 K", "20 K", "30 K", "40 K"]}
                series={[{ c: YELLOW, v: 32.77, fill: 0.2, w: 2.4 }, { c: CYAN, v: 0.1, w: 2.6 }]}
              />
              <Legend
                edges={[828, 888.5, 949]}
                items={[[YELLOW, "Open Files Limit", "32.77 K", "32.77 K", "32.77 K"], [CYAN, "InnoDB Open Files", "21.00", "21.00", "21.00"], [GREEN, "Open Files", "2.00", "2.00", "2.00"]]}
              />
            </Panel>
          </Row>

          <Section title="Table Openings" />
          <Row>
            <Panel title="MySQL Table Open Cache Status" icons={2} className={H.h12}>
              <Chart
                w={980} bottom={304.8} l={31.8} r={926} b={276.4} max={35}
                ticks={["0", "5", "10", "15", "20", "25", "30", "35"]}
                right={["0%", "25%", "50%", "75%", "100%", "125%"]}
                series={[{ c: YELLOW, v: hits, fill: 0.2 }, { c: RED, v: 28, fill: 0.2 }, { c: ORANGE, v: 0, w: 3 }]}
              />
              <Legend
                edges={[812, 880.5, 949]}
                items={[
                  [YELLOW, "Hits", "0.10", "30.90", "26.41"],
                  [RED, "Table Open Cache Hit Ratio|(right-y)", "100.00%", "100.00%", "100.00%"],
                  [ORANGE, "Misses due to Overflows", ...Z3],
                  [CYAN, "Misses", ...Z3],
                ]}
              />
            </Panel>
            <Panel title="MySQL Open Tables" icons={2} className={H.h12}>
              <Chart
                w={980} bottom={365} l={35.3} r={953} b={336.3} max={5}
                ticks={["0", "1 K", "2 K", "3 K", "4 K", "5 K"]}
                series={[{ c: YELLOW, v: 4, fill: 0.2, w: 2.4 }, { c: GREEN, v: 0.148, fill: 0.2, w: 2.4 }]}
              />
              <Legend edges={[833, 891.5, 949]} items={[[YELLOW, "Table Open Cache", "4.00 K", "4.00 K", "4.00 K"], [GREEN, "Open Tables", "148.00", "148.00", "148.00"]]} />
            </Panel>
          </Row>

          <Section title="MySQL Table Definition Cache" />
          <Row>
            <Panel title="MySQL Table Definition Cache" icons={2} className={H.h9}>
              <Chart
                w={1968} bottom={230.7} l={51.4} r={1911.5} b={202.4} max={2.5} minutes={1}
                ticks={["0", "500", "1 K", "1.50 K", "2 K", "2.50 K"]}
                right={["0", "0.250", "0.500", "0.750", "1"]}
                series={[{ c: YELLOW, v: 2, fill: 0.2, w: 2.4 }, { c: GREEN, v: 0.058, w: 2.4, fill: 0.2 }, { c: CYAN, v: 0 }]}
              />
              <Legend
                width={1940} edges={[1827, 1882, 1937]}
                items={[
                  [YELLOW, "Table Definitions Cache Size", "2.00 K", "2.00 K", "2.00 K"],
                  [GREEN, "Open Table Definitions", "56.00", "56.00", "56.00"],
                  [CYAN, "Opened Table Definitions|(right-y)", ...Z3],
                ]}
              />
            </Panel>
          </Row>
        </main>
      </div>
    </div>
  );
}
